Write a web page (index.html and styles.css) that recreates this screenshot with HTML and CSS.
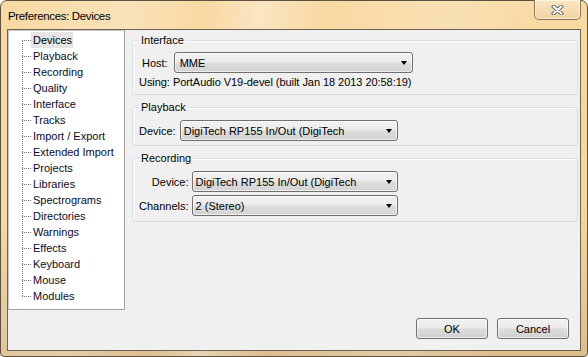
FILE: index.html
```html
<!DOCTYPE html>
<html lang="en">
<head>
  <meta charset="UTF-8">
  <title>Preferences: Devices</title>
  <link rel="stylesheet" href="styles.css">
</head>
<body>
  <div class="window">
    <div class="titlebar">
      <span class="title">Preferences: Devices</span>
      <div class="close">
        <svg width="13" height="10" viewBox="0 0 13 10">
          <path d="M2.5 1.5 L10.5 8.5 M10.5 1.5 L2.5 8.5" stroke="#6a6a6a" stroke-width="4" stroke-linecap="round"/>
          <path d="M2.5 1.5 L10.5 8.5 M10.5 1.5 L2.5 8.5" stroke="#fff" stroke-width="2" stroke-linecap="round"/>
        </svg>
      </div>
    </div>

    <div class="client">
      <div class="main">
        <div class="tree">
          <ul>
            <li class="sel"><span>Devices</span></li>
            <li><span>Playback</span></li>
            <li><span>Recording</span></li>
            <li><span>Quality</span></li>
            <li><span>Interface</span></li>
            <li><span>Tracks</span></li>
            <li><span>Import / Export</span></li>
            <li><span>Extended Import</span></li>
            <li><span>Projects</span></li>
            <li><span>Libraries</span></li>
            <li><span>Spectrograms</span></li>
            <li><span>Directories</span></li>
            <li><span>Warnings</span></li>
            <li><span>Effects</span></li>
            <li><span>Keyboard</span></li>
            <li><span>Mouse</span></li>
            <li><span>Modules</span></li>
          </ul>
        </div>

        <div class="pages">
          <fieldset class="group g-interface">
            <legend>Interface</legend>
            <div class="row host">
              <span class="lbl">Host:</span>
              <div class="combo w-host"><span>MME</span><i class="arrow"></i></div>
            </div>
            <div class="info">Using: PortAudio V19-devel (built Jan 18 2013 20:58:19)</div>
          </fieldset>

          <fieldset class="group g-playback">
            <legend>Playback</legend>
            <div class="row">
              <span class="lbl">Device:</span>
              <div class="combo w-play"><span>DigiTech RP155 In/Out (DigiTech</span><i class="arrow"></i></div>
            </div>
          </fieldset>

          <fieldset class="group g-recording">
            <legend>Recording</legend>
            <div class="grid">
              <span class="lbl">Device:</span>
              <div class="combo w-rec"><span>DigiTech RP155 In/Out (DigiTech</span><i class="arrow"></i></div>
              <span class="lbl">Channels:</span>
              <div class="combo w-rec"><span>2 (Stereo)</span><i class="arrow"></i></div>
            </div>
          </fieldset>
        </div>
      </div>

      <div class="buttons">
        <button class="btn">OK</button>
        <button class="btn">Cancel</button>
      </div>
    </div>
  </div>
</body>
</html>
```

FILE: styles.css
```css
body {
  margin: 0;
  background: #fff;
  font-family: "Liberation Sans", Arial, sans-serif;
  font-size: 11px;
  color: #000;
}
.window {
  box-sizing: border-box;
  width: 588px;
  height: 357px;
  border: 1px solid #5e5244;
  border-radius: 7px 7px 4px 4px;
  padding: 0 6px 5px 6px;
  background:
    linear-gradient(100deg, rgba(255,255,255,0) 0%, rgba(255,255,255,0.25) 20%, rgba(255,255,255,0) 32%, rgba(255,255,255,0.35) 40%, rgba(255,255,255,0) 50%, rgba(255,255,255,0.2) 70%, rgba(255,255,255,0) 85%),
    linear-gradient(#f8d9a2 0%, #f5d6a0 60%, #dcbd8e 100%);
}
.titlebar {
  height: 28px;
  display: flex;
  align-items: flex-start;
  justify-content: space-between;
}
.title {
  margin: 7px 0 0 1px;
  font-family: "Liberation Sans", Arial, sans-serif;
  font-size: 11.5px;
  line-height: 16px;
  letter-spacing: -0.35px;
}
.close {
  box-sizing: border-box;
  width: 47px;
  height: 20px;
  margin-top: -1px;
  border: 1px solid #8c7658;
  border-top: none;
  border-radius: 0 0 5px 5px;
  background: linear-gradient(#fbe7c4, #f1d3a1);
  box-shadow: inset 0 0 0 1px rgba(255,255,255,0.5);
  display: flex;
  align-items: center;
  justify-content: center;
}
.client {
  box-sizing: border-box;
  height: 322px;
  border: 1px solid #6e6250;
  background: #f0f0f0;
  display: flex;
  flex-direction: column;
}
.main {
  display: flex;
  height: 280px;
}
.tree {
  box-sizing: border-box;
  width: 117px;
  height: 280px;
  background: #fff;
  border: 1px solid #a0a0a0;
  border-left-color: #c8c8c8;
  border-top-color: #c8c8c8;
}
.tree ul {
  position: relative;
  list-style: none;
  margin: 0;
  padding: 1px 0 0 0;
}
.tree ul::before {
  content: "";
  position: absolute;
  left: 13px;
  top: 9px;
  bottom: 8px;
  border-left: 1px dotted #7a7a7a;
}
.tree li {
  display: flex;
  align-items: center;
  height: 16px;
}
.tree li::before {
  content: "";
  width: 9px;
  margin-left: 13px;
  border-top: 1px dotted #7a7a7a;
}
.tree li span {
  padding: 0 1px 0 2px;
  line-height: 16px;
  color: #0a0a28;
}
.tree li.sel span {
  background: #e5e5e5;
  color: #000;
  padding-right: 1px;
}
.pages {
  margin: 4px 0 0 7px;
  width: 446px;
}
.group {
  margin: 0;
  padding: 0;
  min-width: 0;
  border: 1px solid #d5dfe5;
  border-radius: 3px;
  box-shadow: inset 1px 1px 0 #fff;
}
.group legend {
  margin-left: 6px;
  padding: 0 2px;
  line-height: 12px;
}
.g-interface { padding-bottom: 5px; }
.g-playback { margin-top: 6px; padding-bottom: 4px; }
.g-recording { margin-top: 6px; padding-bottom: 5px; }
.row {
  display: flex;
  align-items: center;
  margin-top: 7px;
  padding-left: 6px;
}
.row .lbl {
  margin-right: 4px;
}
.host {
  margin-top: 6px;
  padding-left: 9px;
}
.host .lbl {
  margin-right: 6px;
}
.info {
  margin: 3px 0 0 6px;
  line-height: 13px;
  letter-spacing: -0.05px;
}
.grid {
  display: grid;
  grid-template-columns: auto auto;
  justify-content: start;
  align-items: center;
  column-gap: 3px;
  row-gap: 3px;
  margin-top: 7px;
  padding-left: 6px;
}
.grid .lbl {
  text-align: right;
}
.combo {
  box-sizing: border-box;
  height: 21px;
  border: 1px solid #707070;
  border-radius: 3px;
  background: linear-gradient(#f2f2f2 0%, #ebebeb 48%, #dddddd 52%, #d3d3d3 100%);
  box-shadow: inset 0 0 0 1px rgba(255,255,255,0.6);
  display: flex;
  align-items: center;
  justify-content: space-between;
  padding: 0 5px 0 3px;
}
.w-host { width: 239px; padding-left: 5px; }
.w-play { width: 218px; }
.w-rec { width: 206px; }
.arrow {
  width: 0;
  height: 0;
  border-left: 3.5px solid transparent;
  border-right: 3.5px solid transparent;
  border-top: 4px solid #000;
}
.buttons {
  display: flex;
  justify-content: flex-end;
  gap: 9px;
  margin-top: 8px;
  padding-right: 11px;
}
.btn {
  box-sizing: border-box;
  width: 72px;
  height: 21px;
  border: 1px solid #707070;
  border-radius: 3px;
  background: linear-gradient(#f2f2f2 0%, #ebebeb 48%, #dddddd 52%, #cfcfcf 100%);
  box-shadow: inset 0 0 0 1px rgba(255,255,255,0.6);
  font-family: "Liberation Sans", Arial, sans-serif;
  font-size: 11px;
  color: #000;
  padding: 0;
}
```
